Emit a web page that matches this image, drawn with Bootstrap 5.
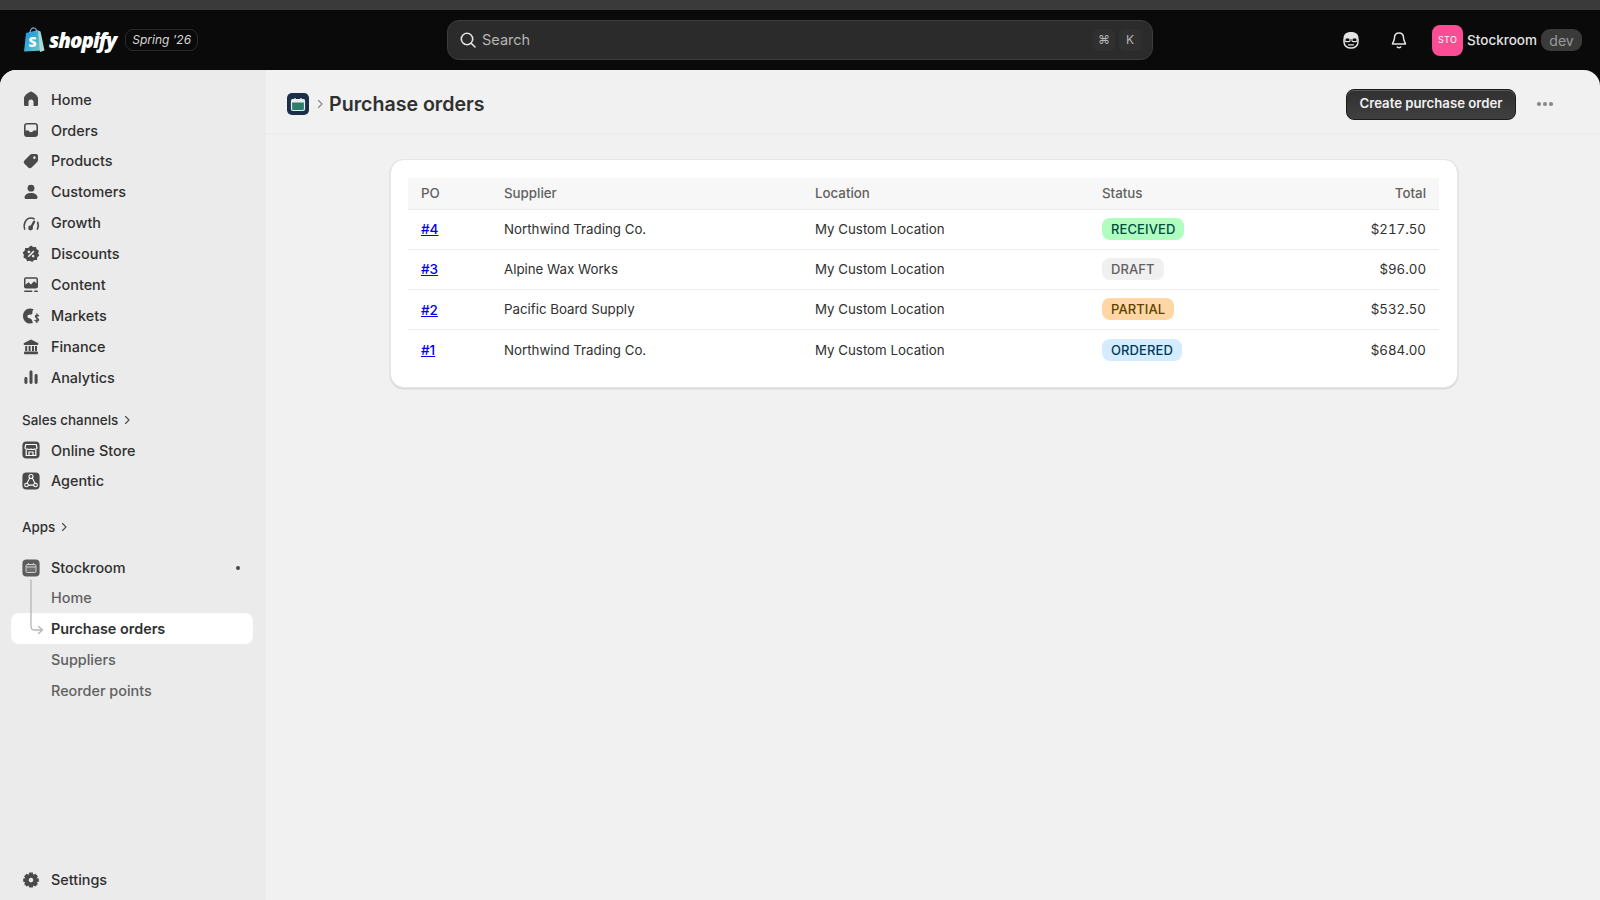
<!DOCTYPE html>
<html lang="en">
<head>
  <meta charset="UTF-8" />
  <meta name="viewport" content="width=device-width, initial-scale=1" />
  <title>Purchase orders</title>
  <link href="https://cdn.jsdelivr.net/npm/bootstrap@5.3.0/dist/css/bootstrap.min.css" rel="stylesheet" />
  <style>
    body {
      background: #0a0a0a;
      font-family: Inter, "Liberation Sans", sans-serif;
      height: 900px;
      overflow: hidden;
      color: #303030;
    }
    .top-strip { height: 10px; background: #3a3a3a; }
    .shop-bar { height: 60px; padding: 0 18px 0 23px; color: #e3e3e3; }
    .shop-word {
      font-family: "Open Sans", sans-serif;
      font-weight: 800;
      font-style: italic;
      font-size: 20.5px;
      letter-spacing: -1px;
      color: #fff;
      margin-left: 4px;
    }
    .spring-tag {
      font-style: italic;
      font-size: 12px;
      color: #d8d8d8;
      border: 1px solid #2a2a2a;
      border-radius: 8px;
      height: 22px;
      width: 73px;
      margin-left: 9px;
    }
    .search-box {
      position: absolute;
      left: 447px;
      top: 10px;
      width: 706px;
      height: 40px;
      background: #2b2b2b;
      border: 1px solid #3d3d3d;
      border-radius: 12px;
      padding: 0 11px 0 11px;
      color: #b5b5b5;
      font-size: 14.5px;
    }
    .search-box > svg { margin-right: 5px; }
    .key-cap {
      width: 22px;
      height: 22px;
      background: #303030;
      border-radius: 5px;
      font-size: 12px;
      color: #b5b5b5;
    }
    .store-mark {
      width: 31px;
      height: 31px;
      background: #fb4d93;
      border-radius: 8px;
      font-size: 9px;
      letter-spacing: .3px;
      color: #fff;
    }
    .store-name { font-size: 13.5px; font-weight: 500; color: #e3e3e3; margin-left: 4px; }
    .dev-tag {
      background: #3a3a3a;
      color: #9a9a9a;
      border-radius: 9px;
      font-size: 14px;
      height: 22px;
      width: 41px;
      margin-left: 4px;
    }
    .admin-shell {
      height: 830px;
      background: #f1f1f1;
      border-radius: 16px 16px 0 0;
      overflow: hidden;
    }
    .side-nav {
      width: 266px;
      flex: 0 0 266px;
      background: #ebebeb;
      padding: 14px 13px 5px 11px;
    }
    .nav-row {
      height: 30.9px;
      padding-left: 11px;
      font-size: 14.4px;
      font-weight: 500;
      color: #303030;
      border-radius: 8px;
      text-decoration: none;
    }
    .nav-row svg { flex: 0 0 18px; margin-right: 11px; width: 18px; height: 18px; color: #4a4a4a; }
    .nav-head {
      height: 30.5px;
      padding-left: 11px;
      font-size: 13.4px;
      font-weight: 500;
      color: #303030;
    }
    .nav-head svg { margin-left: 6px; }
    .gap-sales { margin-top: 11.5px; }
    .gap-apps { margin-top: 15.5px; margin-bottom: 9.5px; }
    .sub-rows { position: relative; margin-top: -.5px; }
    .sub-rows .nav-row { padding-left: 40px; color: #616161; }
    .sub-rows .nav-row.is-current { background: #fff; color: #303030; font-weight: 600; }
    .tree-line { position: absolute; left: 11px; top: -4px; z-index: 1; }
    .app-dot { width: 4px; height: 4px; background: #4a4a4a; border-radius: 50%; margin-left: auto; margin-right: 13px; }
    .page-head {
      height: 64px;
      padding: 5px 40px 0 21px;
      border-bottom: 1px solid #ebebeb;
    }
    .crumb-icon {
      width: 22px;
      height: 22px;
      background: #1c2e4a;
      border-radius: 5px;
    }
    .page-title { font-size: 19.6px; font-weight: 600; margin: 2px 0 0 5px; color: #303030; }
    .btn-create {
      background: linear-gradient(#303030, #404040);
      color: #f1f1f1;
      border: 1px solid #1a1a1a;
      box-shadow: inset 0 1px 0 #5a5a5a;
      border-radius: 8px;
      font-size: 13.2px;
      font-weight: 600;
      height: 31px;
      width: 170px;
      padding: 0;
    }
    .btn-create:hover { background: #2a2a2a; color: #fff; }
    .more-dots { width: 16px; margin-left: 21px; margin-right: 7px; gap: 2.5px; }
    .more-dots i { width: 3.5px; height: 3.5px; border-radius: 50%; background: #8a8a8a; }
    .po-card {
      width: 1068px;
      height: 229px;
      margin: 25px 0 0 124px;
      background: #fff;
      border: 1px solid #e6e6e6;
      border-radius: 14px;
      box-shadow: 0 1px 2px rgba(0, 0, 0, .14);
      padding: 18px 18px 17px 17px;
    }
    .po-table { table-layout: fixed; width: 1031px; margin: 0; font-size: 13.3px; color: #303030; }
    .po-table th {
      background: #f7f7f7;
      color: #616161;
      font-weight: 500;
      height: 31px;
      padding: 1px 13px 0;
      border-bottom: 1px solid #ebebeb;
      vertical-align: middle;
    }
    .po-table td {
      height: 40.3px;
      padding: 1px 13px 0;
      border-bottom: 1px solid #ebebeb;
      vertical-align: middle;
      background: transparent;
      color: #303030;
    }
    .po-table tr:last-child td { border-bottom: 0; }
    .po-table a { color: #0000ee; font-weight: 500; font-size: 13.5px; }
    .po-amount { font-variant-numeric: tabular-nums; }
    .state-pill {
      display: block;
      width: fit-content;
      height: 22px;
      line-height: 22px;
      margin-top: -2px;
      padding: 0 9px;
      border-radius: 8px;
      font-size: 13px;
      font-weight: 500;
      letter-spacing: .1px;
    }
    .state-received { background: #affebf; color: #014b40; }
    .state-draft { background: #f0f0f0; color: #616161; }
    .state-partial { background: #ffd6a4; color: #5e4200; }
    .state-ordered { background: #d5ebff; color: #003a5a; }
  </style>
</head>
<body>
  <div class="top-strip"></div>

  <header class="shop-bar d-flex align-items-center position-relative">
    <!-- logo -->
    <svg width="22" height="26" viewBox="0 0 22 26">
      <defs>
        <linearGradient id="bagFill" x1="0" y1="0" x2="1" y2="1">
          <stop offset="0" stop-color="#1f8fd6" />
          <stop offset=".55" stop-color="#3fb3d8" />
          <stop offset="1" stop-color="#7fd0b8" />
        </linearGradient>
      </defs>
      <path d="M3 6.5 L15 3.5 L20.5 24 L1 25 Z" fill="url(#bagFill)" transform="translate(0 -.5)" />
      <path d="M15 3.5 L17.5 4.5 L21.5 23.5 L17 25 Z" fill="#a9d9d0" />
      <path d="M7 6 C7 2 9.5 .8 11 1 C13 1.2 13.6 3 13.6 5" fill="none" stroke="#7fb6d8" stroke-width="1.2" />
      <text x="5.5" y="20" font-family="Open Sans, sans-serif" font-size="14" font-weight="800" fill="#fff">S</text>
    </svg>
    <span class="shop-word">shopify</span>
    <span class="spring-tag d-flex align-items-center justify-content-center">Spring '26</span>

    <div class="search-box d-flex align-items-center">
      <svg width="18" height="18" viewBox="0 0 18 18" fill="none" stroke="#e3e3e3" stroke-width="1.6" stroke-linecap="round" class="flex-shrink-0">
        <circle cx="8" cy="8" r="5.7" />
        <path d="M12.2 12.2 L16 16" />
      </svg>
      <span class="flex-grow-1">Search</span>
      <span class="key-cap d-flex align-items-center justify-content-center me-1">⌘</span>
      <span class="key-cap d-flex align-items-center justify-content-center">K</span>
    </div>

    <div class="ms-auto d-flex align-items-center">
      <svg width="18" height="18" viewBox="0 0 18 18" style="margin-right:30px">
        <path d="M1.5 8 C1.2 3.5 4 1 9 1 C14 1 16.8 3.5 16.5 8 Z" fill="#e3e3e3" />
        <path d="M2 8 V11 C2 14.5 5 17 9 17 C13 17 16 14.5 16 11 V8" fill="none" stroke="#e3e3e3" stroke-width="1.5" />
        <rect x="3" y="7" width="5" height="3.6" rx="1.2" fill="#0a0a0a" stroke="#e3e3e3" stroke-width="1.2" />
        <rect x="10" y="7" width="5" height="3.6" rx="1.2" fill="#0a0a0a" stroke="#e3e3e3" stroke-width="1.2" />
        <path d="M6.5 13.8 H11.5" stroke="#e3e3e3" stroke-width="1.3" stroke-linecap="round" />
      </svg>
      <svg width="18" height="18" viewBox="0 0 18 18" fill="none" stroke="#e3e3e3" stroke-width="1.5" stroke-linejoin="round" style="margin-right:24px">
        <path d="M9 2 C6 2 4.5 4.2 4.5 6.8 C4.5 10 2.5 11.5 2.5 13 H15.5 C15.5 11.5 13.5 10 13.5 6.8 C13.5 4.2 12 2 9 2 Z" />
        <path d="M7 15.5 C7.5 17 10.5 17 11 15.5" />
      </svg>
      <span class="store-mark d-flex align-items-center justify-content-center">STO</span>
      <span class="store-name">Stockroom</span>
      <span class="dev-tag d-flex align-items-center justify-content-center">dev</span>
    </div>
  </header>

  <div class="admin-shell d-flex">
    <nav class="side-nav d-flex flex-column">
      <a class="nav-row d-flex align-items-center" href="#">
        <svg viewBox="0 0 18 18" fill="currentColor"><path d="M9 1.5 C7.6 1.5 2 5.5 2 8 V14.5 C2 15.5 2.7 16 3.5 16 H6.5 V12 C6.5 10.5 7.5 9.6 9 9.6 C10.5 9.6 11.5 10.5 11.5 12 V16 H14.5 C15.3 16 16 15.5 16 14.5 V8 C16 5.5 10.4 1.5 9 1.5 Z" /></svg>
        Home
      </a>
      <a class="nav-row d-flex align-items-center" href="#">
        <svg viewBox="0 0 18 18" fill="currentColor"><path fill-rule="evenodd" d="M5 2 H13 C14.8 2 16 3.2 16 5 V13 C16 14.8 14.8 16 13 16 H5 C3.2 16 2 14.8 2 13 V5 C2 3.2 3.2 2 5 2 Z M5 3.6 C4.2 3.6 3.6 4.2 3.6 5 V9.5 H6 C6.7 9.5 7 10 7.3 10.5 C7.6 11 8.2 11.3 9 11.3 C9.8 11.3 10.4 11 10.7 10.5 C11 10 11.3 9.5 12 9.5 H14.4 V5 C14.4 4.2 13.8 3.6 13 3.6 Z" /></svg>
        Orders
      </a>
      <a class="nav-row d-flex align-items-center" href="#">
        <svg viewBox="0 0 18 18" fill="currentColor"><path fill-rule="evenodd" d="M10 2 H14 C15.2 2 16 2.8 16 4 V8 C16 8.8 15.7 9.4 15.2 9.9 L9.6 15.5 C8.6 16.5 7.2 16.5 6.2 15.5 L2.5 11.8 C1.5 10.8 1.5 9.4 2.5 8.4 L8.1 2.8 C8.6 2.3 9.2 2 10 2 Z M12.4 4.3 A1.3 1.3 0 1 0 12.41 4.3 Z" /></svg>
        Products
      </a>
      <a class="nav-row d-flex align-items-center" href="#">
        <svg viewBox="0 0 18 18" fill="currentColor"><circle cx="9" cy="5.2" r="3.4" /><path d="M9 10 C5.2 10 2.5 12 2.5 14.5 C2.5 15.4 3.1 16 4 16 H14 C14.9 16 15.5 15.4 15.5 14.5 C15.5 12 12.8 10 9 10 Z" /></svg>
        Customers
      </a>
      <a class="nav-row d-flex align-items-center" href="#">
        <svg viewBox="0 0 18 18" fill="none" stroke="currentColor" stroke-width="1.7" stroke-linecap="round"><path d="M2.6 15 C1 10.5 3.5 4 9 4 C10.2 4 11.2 4.3 12 4.8" /><path d="M15.4 15 C16.4 12.8 16.6 10.5 15.7 8.4" /><path d="M8.6 14.2 L12.2 7.6" stroke-width="2.2" /><circle cx="8.6" cy="14" r="1.6" fill="currentColor" /></svg>
        Growth
      </a>
      <a class="nav-row d-flex align-items-center" href="#">
        <svg viewBox="0 0 18 18" fill="currentColor"><path fill-rule="evenodd" d="M9 .6 L11.2 2 L13.9 1.9 L14.7 4.3 L17 5.8 L16.1 8.3 L17.3 10.6 L15.3 12.3 L14.9 15 L12.2 15.1 L10.2 17 L8 15.8 L5.2 16.3 L4 13.8 L1.5 12.7 L1.9 10 L.7 7.6 L2.7 5.8 L3.2 3.1 L6 2.9 Z M6.9 5.6 A1.3 1.3 0 1 0 6.91 5.6 Z M11.1 9.8 A1.3 1.3 0 1 0 11.11 9.8 Z M11.3 5.6 L5.7 11.2 L6.8 12.3 L12.4 6.7 Z" /></svg>
        Discounts
      </a>
      <a class="nav-row d-flex align-items-center" href="#">
        <svg viewBox="0 0 18 18" fill="currentColor"><path fill-rule="evenodd" d="M4 1.2 H14 C15.2 1.2 16 2 16 3.2 V10.5 C16 11.7 15.2 12.5 14 12.5 H4 C2.8 12.5 2 11.7 2 10.5 V3.2 C2 2 2.8 1.2 4 1.2 Z M4 2.8 C3.7 2.8 3.5 3 3.5 3.3 V8.8 L6.5 6.3 L9 8.6 L12 5.3 L14.5 7.3 V3.3 C14.5 3 14.3 2.8 14 2.8 Z" /><rect x="2" y="14.4" width="8.5" height="1.7" rx=".8" /><rect x="12" y="14.4" width="4" height="1.7" rx=".8" /></svg>
        Content
      </a>
      <a class="nav-row d-flex align-items-center" href="#">
        <svg viewBox="0 0 18 18" fill="currentColor"><path d="M8 1.4 C4 1.4 1 4.8 1 9 C1 13.2 4 16.6 8 16.6 C9.2 16.6 10.2 16.3 11 15.8 C10.2 14.8 10.4 13.2 9.4 12.2 C8.2 11 5.8 11.6 5.4 9.8 C5.1 8.4 6.8 7.4 8 7.6 C9.6 7.9 10.6 6.8 10.4 5.4 C10.3 4.2 10.8 3.2 11.8 2.6 C10.7 1.8 9.4 1.4 8 1.4 Z" /><path d="M16.6 8.8 C16.2 7.9 13.6 7.7 13.4 9.4 C13.2 11.2 16.8 11 16.6 13 C16.4 14.6 13.6 14.4 13 13.4 M14.9 6.8 V15.6" fill="none" stroke="currentColor" stroke-width="1.3" stroke-linecap="round" /></svg>
        Markets
      </a>
      <a class="nav-row d-flex align-items-center" href="#">
        <svg viewBox="0 0 18 18" fill="currentColor"><path d="M9 1.5 L16 5 C16.6 5.4 16.4 7 15.6 7 H2.4 C1.6 7 1.4 5.4 2 5 Z" /><rect x="3.2" y="8" width="2" height="5" /><rect x="6.6" y="8" width="2" height="5" /><rect x="10" y="8" width="2" height="5" /><rect x="13" y="8" width="2" height="5" /><rect x="2" y="13.6" width="14" height="2.6" rx=".8" /></svg>
        Finance
      </a>
      <a class="nav-row d-flex align-items-center" href="#">
        <svg viewBox="0 0 18 18" fill="currentColor"><rect x="2.4" y="9" width="3" height="7" rx="1.4" /><rect x="7.5" y="2.5" width="3" height="13.5" rx="1.4" /><rect x="12.6" y="6" width="3" height="10" rx="1.4" /></svg>
        Analytics
      </a>

      <div class="nav-head gap-sales d-flex align-items-center">
        Sales channels
        <svg width="7" height="10" viewBox="0 0 7 10" fill="none" stroke="#4a4a4a" stroke-width="1.1" stroke-linecap="round" stroke-linejoin="round"><path d="M1.5 1.5 L5 5 L1.5 8.5" /></svg>
      </div>
      <a class="nav-row d-flex align-items-center" href="#">
        <svg viewBox="0 0 18 18"><rect x="0.4" y=".4" width="17.2" height="17.2" rx="4" fill="#4a4a4a" /><path d="M3.8 3.5 H14.2 L15 6.8 C15 8 13.6 8.6 12.4 8 C11 8.8 10 8.6 9 8 C8 8.6 7 8.8 5.6 8 C4.4 8.6 3 8 3 6.8 Z" fill="none" stroke="#fff" stroke-width="1.2" /><path d="M4.2 9 V14.5 H13.8 V9 M7 14.5 V11 H11 V14.5" fill="none" stroke="#fff" stroke-width="1.2" /></svg>
        Online Store
      </a>
      <a class="nav-row d-flex align-items-center" href="#">
        <svg viewBox="0 0 18 18"><rect x="0.4" y=".4" width="17.2" height="17.2" rx="4" fill="#4a4a4a" /><path d="M9 4 L14 13.5 H4 Z" fill="none" stroke="#fff" stroke-width="1.1" transform="translate(0 -.4)" /><circle cx="9" cy="4.5" r="2" fill="#4a4a4a" stroke="#fff" stroke-width="1.1" /><circle cx="4.5" cy="13" r="1.8" fill="#4a4a4a" stroke="#fff" stroke-width="1.1" /><circle cx="13.5" cy="13" r="1.8" fill="#4a4a4a" stroke="#fff" stroke-width="1.1" /></svg>
        Agentic
      </a>

      <div class="nav-head gap-apps d-flex align-items-center">
        Apps
        <svg width="7" height="10" viewBox="0 0 7 10" fill="none" stroke="#4a4a4a" stroke-width="1.1" stroke-linecap="round" stroke-linejoin="round"><path d="M1.5 1.5 L5 5 L1.5 8.5" /></svg>
      </div>
      <a class="nav-row d-flex align-items-center" href="#">
        <svg viewBox="0 0 18 18"><rect x="0.4" y=".4" width="17.2" height="17.2" rx="4" fill="#5c5c5c" /><rect x="4" y="5.5" width="10" height="8" rx="1.2" fill="#6f6f6f" stroke="#d0d0d0" stroke-width="1" /><path d="M4 8 H14" stroke="#d0d0d0" /><path d="M6.5 4 V6 M11.5 4 V6" stroke="#d0d0d0" /></svg>
        Stockroom
        <span class="app-dot"></span>
      </a>
      <div class="sub-rows d-flex flex-column">
        <svg class="tree-line" width="24" height="70" viewBox="0 0 24 70" fill="none" stroke="#b5b5b5" stroke-width="1.3" stroke-linecap="round" stroke-linejoin="round">
          <path d="M9 1 V47 C9 50 10 51 12 51 H20" />
          <path d="M16.5 47.5 L20.5 51 L16.5 54.5" />
        </svg>
        <a class="nav-row d-flex align-items-center" href="#">Home</a>
        <a class="nav-row is-current d-flex align-items-center" href="#">Purchase orders</a>
        <a class="nav-row d-flex align-items-center" href="#">Suppliers</a>
        <a class="nav-row d-flex align-items-center" href="#">Reorder points</a>
      </div>

      <a class="nav-row d-flex align-items-center mt-auto" href="#">
        <svg viewBox="0 0 18 18" fill="currentColor"><path fill-rule="evenodd" d="M7.2 1.5 H10.8 L11.4 3.8 L13.4 2.8 L15.9 5.3 L14.8 7.2 L16.8 7.5 V10.8 L14.8 11.2 L15.9 13.1 L13.4 15.6 L11.4 14.5 L10.8 16.6 H7.2 L6.6 14.5 L4.6 15.6 L2.1 13.1 L3.2 11.2 L1.2 10.8 V7.5 L3.2 7.2 L2.1 5.3 L4.6 2.8 L6.6 3.8 Z M9 6.8 A2.3 2.3 0 1 0 9.01 6.8 Z" /></svg>
        Settings
      </a>
    </nav>

    <main class="flex-grow-1">
      <div class="page-head d-flex align-items-center">
        <span class="crumb-icon d-flex align-items-center justify-content-center">
          <svg width="16" height="16" viewBox="0 0 16 16">
            <rect x="1.5" y="3.5" width="13" height="11" rx="1.5" fill="#2f7d6b" stroke="#e8eef0" stroke-width="1.2" />
            <rect x="1.5" y="3.5" width="13" height="3" fill="#e8eef0" />
            <path d="M5 2 V4 M11 2 V4" stroke="#e8eef0" stroke-width="1.3" />
          </svg>
        </span>
        <svg class="ms-2" width="7" height="10" viewBox="0 0 7 10" fill="none" stroke="#8a8a8a" stroke-width="1.2" stroke-linecap="round" stroke-linejoin="round"><path d="M1.5 1.5 L5 5 L1.5 8.5" /></svg>
        <h1 class="page-title">Purchase orders</h1>
        <button type="button" class="btn btn-create ms-auto">Create purchase order</button>
        <span class="more-dots d-flex"><i></i><i></i><i></i></span>
      </div>

      <div class="po-card">
        <table class="table po-table">
          <colgroup>
            <col style="width:83px" />
            <col style="width:311px" />
            <col style="width:287px" />
            <col style="width:200px" />
            <col />
          </colgroup>
          <thead>
            <tr><th>PO</th><th>Supplier</th><th>Location</th><th>Status</th><th class="text-end">Total</th></tr>
          </thead>
          <tbody>
            <tr>
              <td><a href="#">#4</a></td><td>Northwind Trading Co.</td><td>My Custom Location</td>
              <td><span class="state-pill state-received">RECEIVED</span></td><td class="text-end po-amount">$217.50</td>
            </tr>
            <tr>
              <td><a href="#">#3</a></td><td>Alpine Wax Works</td><td>My Custom Location</td>
              <td><span class="state-pill state-draft">DRAFT</span></td><td class="text-end po-amount">$96.00</td>
            </tr>
            <tr>
              <td><a href="#">#2</a></td><td>Pacific Board Supply</td><td>My Custom Location</td>
              <td><span class="state-pill state-partial">PARTIAL</span></td><td class="text-end po-amount">$532.50</td>
            </tr>
            <tr>
              <td><a href="#">#1</a></td><td>Northwind Trading Co.</td><td>My Custom Location</td>
              <td><span class="state-pill state-ordered">ORDERED</span></td><td class="text-end po-amount">$684.00</td>
            </tr>
          </tbody>
        </table>
      </div>
    </main>
  </div>

  <script src="https://cdn.jsdelivr.net/npm/bootstrap@5.3.0/dist/js/bootstrap.bundle.min.js"></script>
</body>
</html>
